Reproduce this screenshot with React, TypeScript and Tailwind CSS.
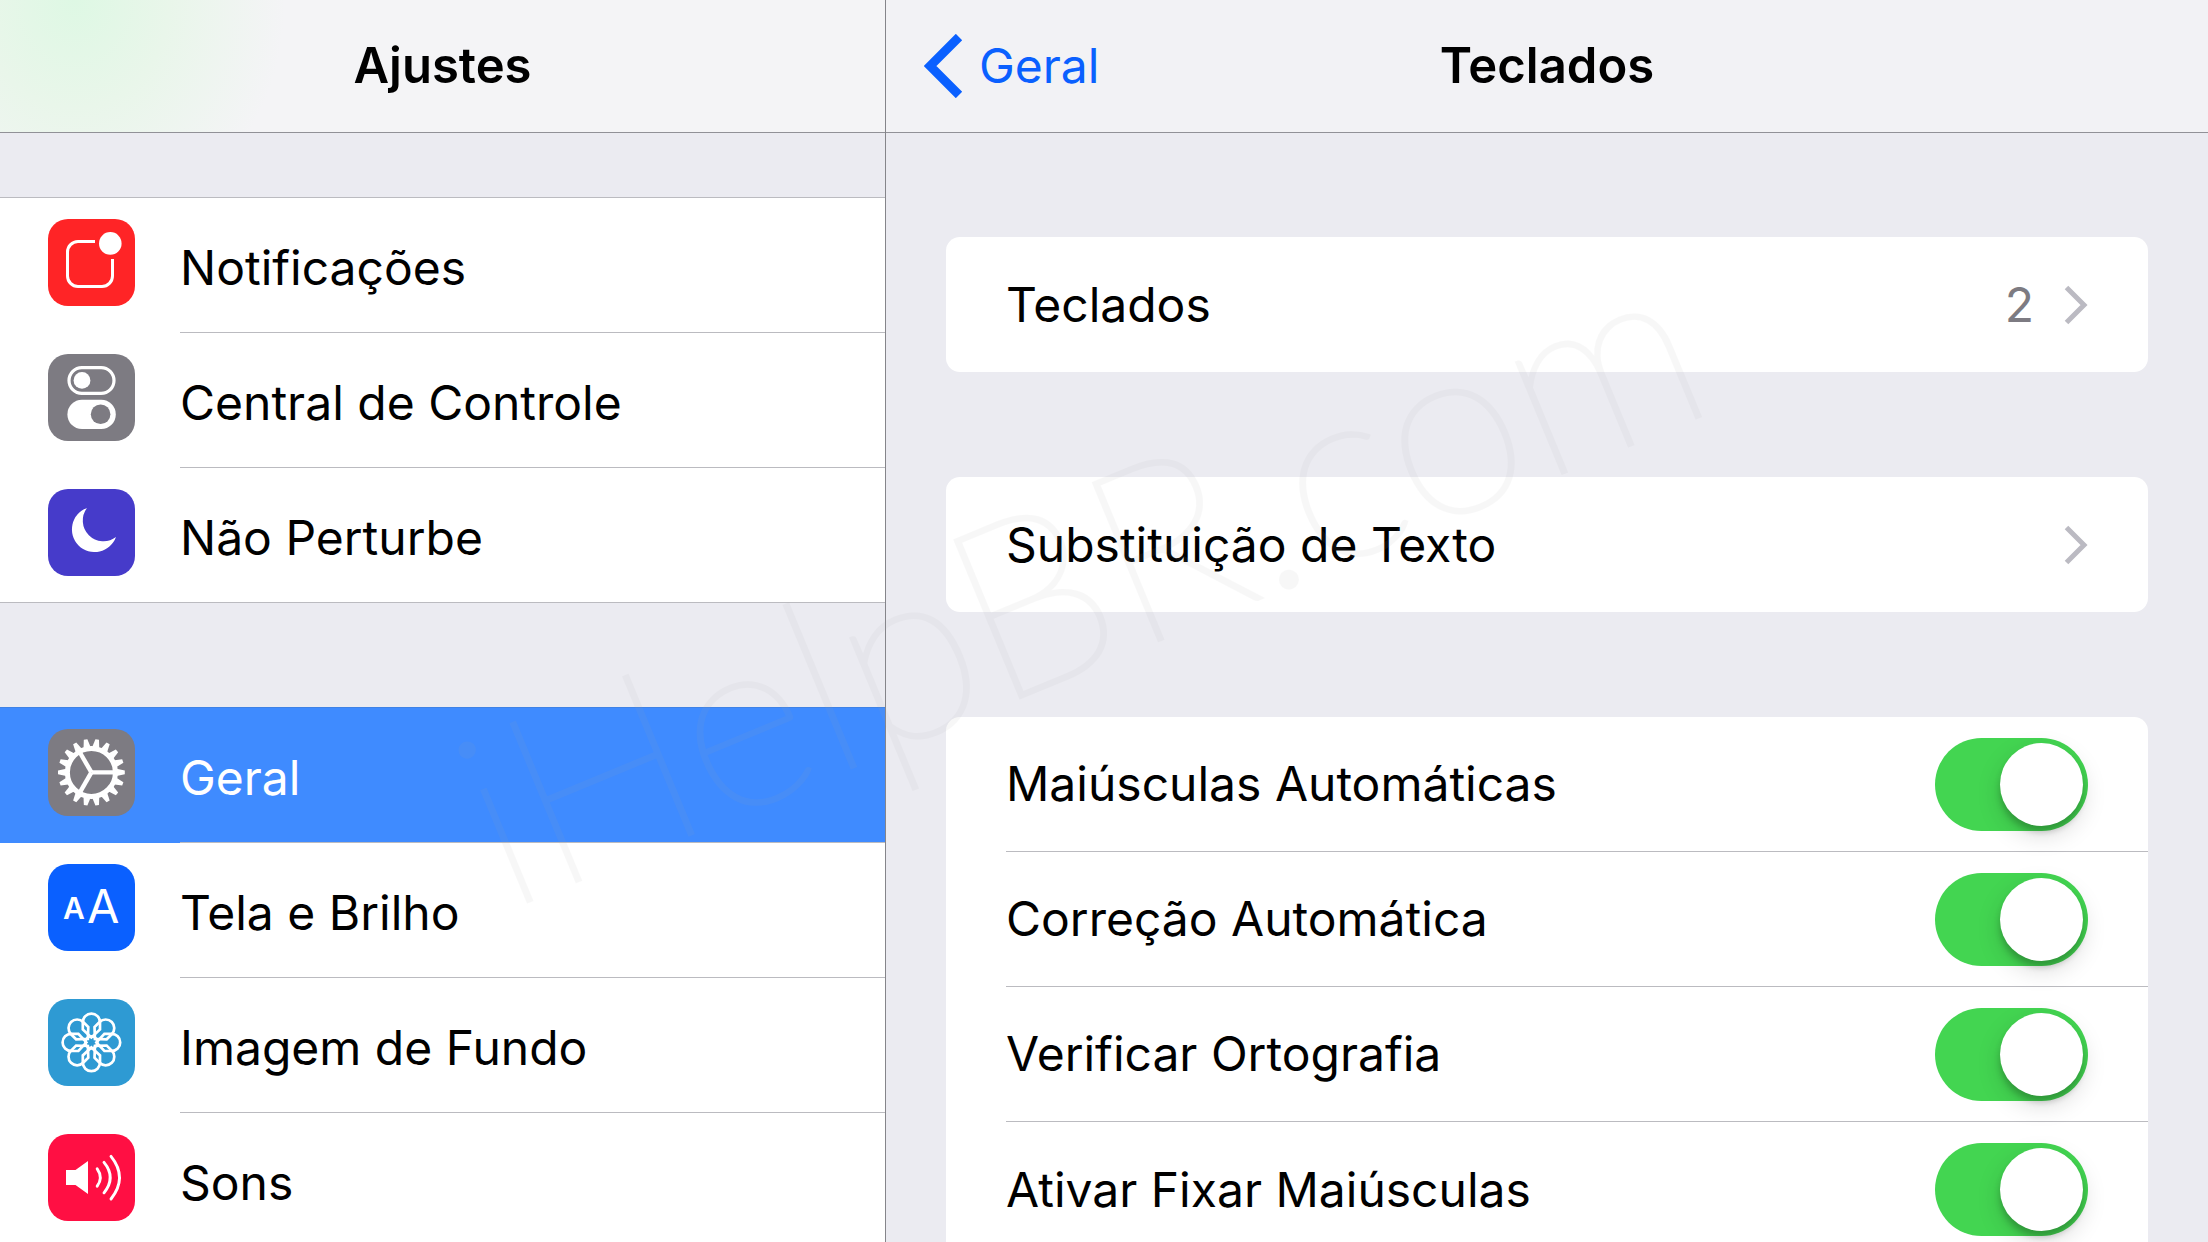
import React, { useState } from 'react';

const NotificationsIcon = () => (
  <>
    <path d="M47 22.5H30A10.5 10.5 0 0 0 19.5 33V57A10.5 10.5 0 0 0 30 67.5H54A10.5 10.5 0 0 0 64.5 57V40" fill="none" stroke="white" strokeWidth="3" />
    <circle cx="62.3" cy="24.4" r="11.3" fill="white" />
  </>
);

const ControlCenterIcon = () => (
  <>
    <rect x="21" y="13.6" width="45" height="25.8" rx="12.9" fill="none" stroke="white" strokeWidth="3.2" />
    <circle cx="34" cy="26.4" r="8.4" fill="white" />
    <rect x="19.4" y="45.7" width="48.4" height="29.3" rx="14.6" fill="white" />
    <circle cx="52.6" cy="60.3" r="9.8" fill="#7d7b82" />
  </>
);

const MoonIcon = () => (
  <path d="M39 19A22.7 22.7 0 1 0 68 48A20.7 20.7 0 0 1 39 19Z" fill="white" />
);

const GearIcon = () => (
  <g transform="translate(43.4 43.4)" fill="white">
    {Array.from({ length: 18 }, (_, i) => (
      <path key={i} d="M24 -3.8L33.4 -1.8V1.8L24 3.8Z" transform={`rotate(${i * 20})`} />
    ))}
    <circle r="24" fill="none" stroke="white" strokeWidth="5" />
    {[0, 120, 240].map(angle => (
      <path key={angle} d="M0 -2.2H23V2.2H0Z" transform={`rotate(${angle})`} />
    ))}
  </g>
);

const DisplayIcon = () => (
  <g fill="white" fontFamily="Inter, sans-serif">
    <text x="15" y="55" fontSize="30" fontWeight="600">A</text>
    <text x="39" y="59" fontSize="47" fontWeight="400">A</text>
  </g>
);

const FlowerIcon = () => (
  <g transform="translate(43.4 43.4)" fill="none" stroke="white" strokeWidth="2.7">
    {Array.from({ length: 8 }, (_, i) => (
      <path key={i} d="M0 -5L-8.6 -13V-20.2A8.6 8.6 0 0 1 8.6 -20.2V-13Z" transform={`rotate(${i * 45})`} />
    ))}
    <circle r="6" />
  </g>
);

const SpeakerIcon = () => (
  <>
    <path d="M18 36H27.5L40 27V60L27.5 51H18Z" fill="white" />
    <g fill="none" stroke="white" strokeWidth="2.9" strokeLinecap="round">
      <path d="M49.2 34.8Q55.4 43.5 49.2 52.2" />
      <path d="M56 28.4Q68.4 43.5 56 58.8" />
      <path d="M63 22.4Q80 43.5 63 65" />
    </g>
  </>
);

interface MenuItem {
  label: string;
  color: string;
  icon: React.FC;
}

const MENU_GROUPS: MenuItem[][] = [
  [
    { label: 'Notificações', color: 'bg-[#ff2426]', icon: NotificationsIcon },
    { label: 'Central de Controle', color: 'bg-[#7d7b82]', icon: ControlCenterIcon },
    { label: 'Não Perturbe', color: 'bg-[#463bca]', icon: MoonIcon },
  ],
  [
    { label: 'Geral', color: 'bg-[#7d7b82]', icon: GearIcon },
    { label: 'Tela e Brilho', color: 'bg-[#0a60ff]', icon: DisplayIcon },
    { label: 'Imagem de Fundo', color: 'bg-[#2e9ad3]', icon: FlowerIcon },
    { label: 'Sons', color: 'bg-[#ff0f43]', icon: SpeakerIcon },
  ],
];

const LINKS = [
  { label: 'Teclados', value: '2' },
  { label: 'Substituição de Texto', value: '' },
];

const SWITCHES = ['Maiúsculas Automáticas', 'Correção Automática', 'Verificar Ortografia', 'Ativar Fixar Maiúsculas'];

const Sidebar: React.FC = () => {
  const [selected, setSelected] = useState('Geral');

  return (
    <aside className="flex w-[885px] shrink-0 flex-col">
      <header className="flex h-[133px] shrink-0 items-center justify-center border-b border-[#919197] bg-[#f4f4f6] bg-[radial-gradient(ellipse_210px_240px_at_75px_0px,#def8e4,#e9f6ea_45%,#f4f4f6)]">
        <h1 className="text-[49px] font-semibold">Ajustes</h1>
      </header>
      <nav className="flex flex-1 flex-col gap-[104px] overflow-y-auto pt-16 [scrollbar-width:none]">
        {MENU_GROUPS.map((group, index) => (
          <ul
            key={index}
            className={`border-t bg-white ${group[0].label === selected ? 'border-[#3f82e6]' : 'border-[#bbbbc0]'}`}
          >
            {group.map((item, i) => {
              const active = item.label === selected;
              const last = i === group.length - 1;
              return (
                <li key={item.label} className={last ? 'border-b border-[#bbbbc0]' : ''}>
                  <button
                    onClick={() => setSelected(item.label)}
                    className={`flex w-full items-center pl-12 text-left ${active ? 'bg-[#3f8bff] text-white' : ''}`}
                  >
                    <span className={`mr-[45px] mb-1.5 size-[87px] shrink-0 overflow-hidden rounded-[20px] ${item.color}`}>
                      <svg viewBox="0 0 87 87" className="size-full" aria-hidden="true">
                        <item.icon />
                      </svg>
                    </span>
                    <span className={`flex flex-1 items-center pt-1.5 ${last ? 'h-[134px]' : 'h-[135px] border-b border-[#bbbbc0]'}`}>
                      {item.label}
                    </span>
                  </button>
                </li>
              );
            })}
          </ul>
        ))}
      </nav>
    </aside>
  );
};

const Switch: React.FC<{ label: string }> = ({ label }) => {
  const [on, setOn] = useState(true);

  return (
    <label className="ml-[60px] flex h-[135px] items-center justify-between border-b border-[#bbbbc0] pr-[60px] last:border-b-0">
      {label}
      <input
        type="checkbox"
        role="switch"
        checked={on}
        onChange={e => setOn(e.target.checked)}
        className="flex h-[93px] w-[153px] shrink-0 appearance-none items-center rounded-full bg-[#e5e5ea] p-[5px] before:size-[83px] before:rounded-full before:bg-white before:shadow-[0_9px_24px_rgba(0,0,0,0.15),0_6px_6px_rgba(0,0,0,0.2)] checked:justify-end checked:bg-[#43d551]"
      />
    </label>
  );
};

const App: React.FC = () => {
  return (
    <div className="relative flex h-screen overflow-hidden bg-[#ebebf1] font-['Inter',sans-serif] text-[48px] leading-[60px] text-black">
      <Sidebar />
      <main className="flex flex-1 flex-col border-l border-[#85858a]">
        <header className="grid h-[133px] shrink-0 grid-cols-[1fr_auto_1fr] items-center border-b border-[#919197] bg-[#f2f2f5]">
          <a href="#geral" className="flex items-center gap-4 pl-[38px] text-[#0a60ff]">
            <svg viewBox="0 0 39 64" className="h-16 w-[39px]" fill="none" aria-hidden="true">
              <path d="M35 3L6 32L35 61" stroke="currentColor" strokeWidth="9" />
            </svg>
            Geral
          </a>
          <h2 className="text-[49px] font-semibold">Teclados</h2>
        </header>
        <div className="flex flex-1 flex-col gap-[105px] overflow-y-auto px-[60px] pt-[104px] [scrollbar-width:none]">
          {LINKS.map(link => (
            <a
              key={link.label}
              href="#"
              className="flex h-[135px] shrink-0 items-center rounded-[14px] bg-white px-[60px]"
            >
              <span className="flex-1">{link.label}</span>
              <span className="text-[#7d7b82]">{link.value}</span>
              <svg viewBox="0 0 24 40" className="ml-[30px] h-10 w-6" fill="none" aria-hidden="true">
                <path d="M2.5 2.5L20 20L2.5 37.5" stroke="#bbbac2" strokeWidth="5" />
              </svg>
            </a>
          ))}
          <div className="shrink-0 rounded-[14px] bg-white">
            {SWITCHES.map(label => (
              <Switch key={label} label={label} />
            ))}
          </div>
        </div>
      </main>

      {/* Watermark */}
      <span className="pointer-events-none absolute top-[573px] left-[1077px] -translate-1/2 -rotate-[22.5deg] font-['Lato',sans-serif] text-[242px] leading-none font-thin whitespace-nowrap text-[#a8a8a8] opacity-8 [-webkit-text-stroke:4px_#a8a8a8]">
        iHelpBR.com
      </span>
    </div>
  );
};

export default App;
